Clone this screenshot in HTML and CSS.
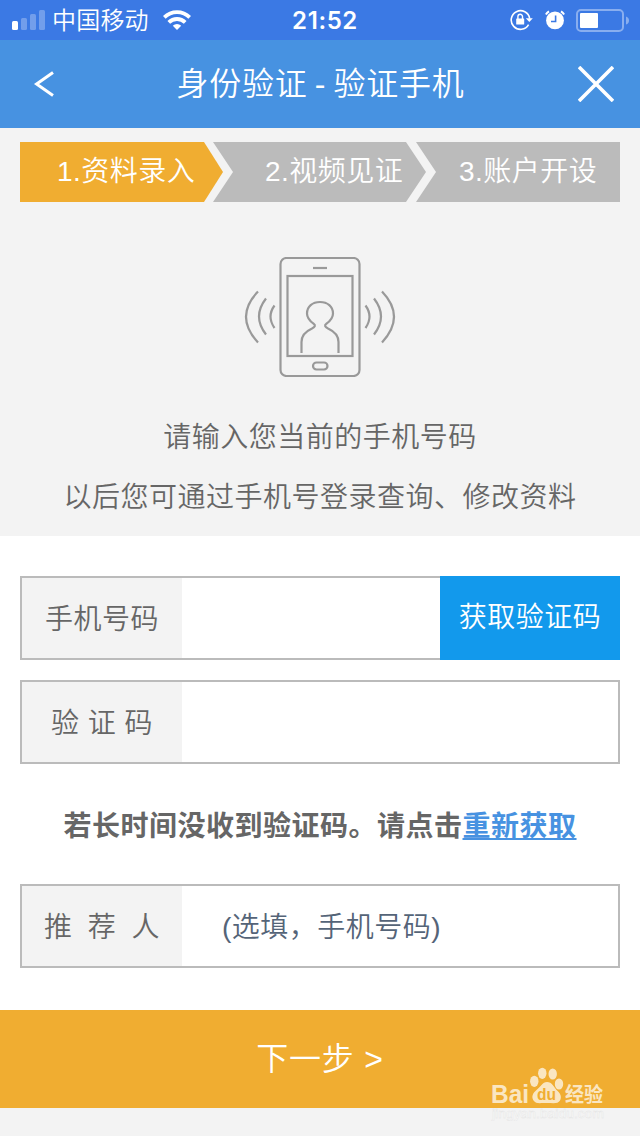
FILE: index.html
```html
<!DOCTYPE html>
<html lang="zh-CN">

<head>
    <meta charset="UTF-8">
    <meta name="viewport" content="width=device-width, initial-scale=1.0">
    <title>身份验证 - 验证手机</title>
    <link rel="stylesheet" href="styles.css">
</head>

<body>
<div class="status">
    <div class="status-left">
        <svg class="signal" width="34" height="20" viewBox="0 0 34 20" fill="#fff">
            <rect x="0" y="11" width="6" height="9" rx="1.5" />
            <g opacity=".28">
                <rect x="9" y="8" width="6" height="12" rx="1.5" />
                <rect x="18" y="4" width="6" height="16" rx="1.5" />
                <rect x="27" y="0" width="6" height="20" rx="1.5" />
            </g>
        </svg>
        <span class="carrier">中国移动</span>
        <svg class="wifi" width="28" height="20" viewBox="0 0 28 20" fill="none" stroke="#fff" stroke-width="3.8">
            <path d="M1.3 7.3a18 18 0 0 1 25.4 0" />
            <path d="M5.8 12.4a11.6 11.6 0 0 1 16.4 0" />
            <path d="M14 20l-4.2-4.3a6 6 0 0 1 8.4 0z" fill="#fff" stroke="none" />
        </svg>
    </div>
    <span class="time">21:52</span>
    <div class="status-right">
        <svg width="24" height="22" viewBox="0 0 24 22" fill="none" stroke="#fff" stroke-width="1.6">
            <path d="M18.6 15.6a9.3 9.3 0 1 1 1.1-6" />
            <path d="M15.8 9.2h7L19.3 13z" fill="#fff" stroke="none" />
            <rect x="6.2" y="9.4" width="8" height="6.2" rx=".6" fill="#fff" stroke="none" />
            <path d="M7.9 10V7.6a2.3 2.3 0 0 1 4.6 0V10" stroke-width="1.4" />
        </svg>
        <svg class="alarm" width="20" height="20" viewBox="0 0 20 20">
            <circle cx="10" cy="10.4" r="8.9" fill="#fff" />
            <path d="M.9 4.6A9 9 0 0 1 4 1.4M19.1 4.6A9 9 0 0 0 16 1.4" fill="none" stroke="#fff" stroke-width="2" />
            <path d="M10.6 5.5v6H6" fill="none" stroke="#3b79e4" stroke-width="1.6" />
        </svg>
        <svg class="battery" width="54" height="24" viewBox="0 0 54 24">
            <rect x="1" y="2" width="46" height="21" rx="4" fill="none" stroke="#fff" stroke-width="2" opacity=".4" />
            <path d="M50 8.5q3 1 3 4t-3 4z" fill="#fff" opacity=".4" />
            <rect x="4" y="5" width="18" height="15" rx="1" fill="#fff" />
        </svg>
    </div>
</div>

<div class="header">
    <svg class="back" width="22" height="28" viewBox="0 0 22 28" fill="none" stroke="#fff" stroke-width="3">
        <path d="M20 2.6L3.6 14 20 25.4" />
    </svg>
    <h1>身份验证 - 验证手机</h1>
    <svg class="close" width="36" height="36" viewBox="0 0 36 36" stroke="#fff" stroke-width="3.6">
        <path d="M1 1l34 34M35 1L1 35" />
    </svg>
</div>

<div class="intro">
    <div class="steps">
        <div class="step step1">1.资料录入</div>
        <div class="step step2">2.视频见证</div>
        <div class="step step3">3.账户开设</div>
    </div>
    <svg class="phone" width="152" height="120" viewBox="0 0 152 120" fill="none" stroke="#999" stroke-width="2.2">
        <rect x="36.5" y="1" width="79" height="118" rx="6" />
        <path d="M69 11h14" />
        <rect x="43.5" y="19" width="65" height="80" />
        <rect x="69" y="105.5" width="14.5" height="7" rx="3.5" />
        <path d="M57.5 96V85c0-7 5-11 10.5-13.5 3-1.500 4-3 1.500-4.800-4-3-6.500-6-6.500-10.200 0-7 5.500-11.500 13-11.500s13 4.500 13 11.500c0 4.200-2.500 7.200-6.500 10.200-2.500 1.800-1.500 3.300 1.500 4.800 5.500 2.500 10.500 6.500 10.500 13.500v11" />
        <path d="M30.5 48.5q-8 11 0 22.500M22 41.5q-14 18 0 36M14 34.5q-24 25 0 51" />
        <path d="M121.5 48.5q8 11 0 22.500M130 41.5q14 18 0 36M138 34.5q24 25 0 51" />
    </svg>
    <p>请输入您当前的手机号码</p>
    <p>以后您可通过手机号登录查询、修改资料</p>
</div>

<div class="form">
    <div class="row">
        <label>手机号码</label>
        <div class="field"></div>
        <div class="code">获取验证码</div>
    </div>
    <div class="row">
        <label>验 证 码</label>
        <div class="field"></div>
    </div>
    <p class="tip">若长时间没收到验证码。请点击<a>重新获取</a></p>
    <div class="row">
        <label class="wide">推 荐 人</label>
        <div class="field">(选填，手机号码)</div>
    </div>
</div>

<div class="next">下一步 &gt;</div>

<div class="mark">
    <svg width="120" height="56" viewBox="0 0 120 56">
        <g class="logo">
            <text x="2" y="36.5" font-size="26" textLength="38" lengthAdjust="spacingAndGlyphs">Bai</text>
            <ellipse cx="45.3" cy="15.3" rx="4.2" ry="5.6" />
            <ellipse cx="53.3" cy="7.3" rx="4.2" ry="5.6" />
            <ellipse cx="63.7" cy="8" rx="4.2" ry="5.6" />
            <ellipse cx="70" cy="18" rx="4.2" ry="5.6" />
            <path d="M58 16c5 0 7 5 9.500 8 4 3 5.500 7 3.500 10.500-2 3.500-6 2.500-13.500 2.500s-10.500 1-13-2.500c-2.500-4-.5-7.500 3-10.500 4-3 6-8 10.500-8z" />
            <text class="cn" x="76" y="36" font-size="20" textLength="38" lengthAdjust="spacingAndGlyphs">经验</text>
        </g>
        <text class="du" x="48" y="34" font-size="16" textLength="19" lengthAdjust="spacingAndGlyphs">du</text>
        <text class="site" x="3" y="51.5" font-size="13" textLength="112" lengthAdjust="spacingAndGlyphs">jingyan.baidu.com</text>
    </svg>
</div>
</body>

</html>
```
FILE: styles.css
```css
* {
    box-sizing: border-box;
}

body,
html {
    margin: 0;
    padding: 0;
}

body {
    position: relative;
    width: 640px;
    height: 1136px;
    overflow: hidden;
    background-color: #f3f3f3;
    color: #666;
    font-family: "Liberation Sans", "Noto Sans CJK SC", sans-serif;
    font-size: 28px;
    font-weight: 350;
    letter-spacing: .5px;
}

svg {
    display: block;
    flex: none;
}

p,
h1 {
    margin: 0;
}

.status {
    display: grid;
    grid-template-columns: 1fr auto 1fr;
    align-items: center;
    height: 40px;
    padding: 0 11px 0 12px;
    background-color: #3b79e4;
    color: #fff;
}

.status-left,
.status-right {
    display: flex;
    align-items: center;
}

.status-right {
    justify-content: flex-end;
}

.carrier {
    margin: 0 14px 0 6px;
    padding-top: 2px;
    font-size: 24px;
    line-height: 38px;
    letter-spacing: .2px;
}

.time {
    padding-left: 9px;
    font-family: Inter, sans-serif;
    font-size: 24px;
    font-weight: 600;
    letter-spacing: .6px;
}

.alarm {
    margin: 0 11px;
}

.battery {
    margin-right: -1px;
}

.header {
    display: flex;
    align-items: center;
    justify-content: space-between;
    height: 88px;
    padding: 0 26px 0 33px;
    background-color: #4792e1;
    color: #fff;
}

.header h1 {
    padding: 0 0 7px 8px;
    font-size: 32px;
    font-weight: 350;
    letter-spacing: .8px;
    word-spacing: -2.5px;
}

.intro {
    height: 408px;
    padding-top: 14px;
    text-align: center;
}

.steps {
    display: flex;
    height: 60px;
    margin: 0 20px;
    color: #fff;
    line-height: 59px;
    text-align: left;
}

.step {
    background-color: #bbb;
}

.step1 {
    width: 203px;
    padding-left: 37px;
    background-color: #f0ad31;
    clip-path: polygon(0 0, 184px 0, 100% 50%, 184px 100%, 0 100%);
}

.step2 {
    width: 213px;
    margin-left: -10px;
    padding-left: 52px;
    clip-path: polygon(0 0, 193px 0, 100% 50%, 193px 100%, 0 100%, 20px 50%);
}

.step3 {
    width: 204px;
    margin-left: -10px;
    padding-left: 43px;
    clip-path: polygon(0 0, 100% 0, 100% 100%, 0 100%, 20px 50%);
}

.phone {
    margin: 55px auto 31px;
}

.intro p {
    line-height: 60px;
}

.form {
    height: 474px;
    padding: 40px 20px 0;
    background-color: #fff;
}

.row {
    display: flex;
    height: 84px;
    margin-bottom: 20px;
    border: 2px solid #bbb;
    line-height: 83px;
}

.row label {
    width: 160px;
    background-color: #f3f3f3;
    text-align: center;
}

.row .wide {
    word-spacing: 7px;
}

.field {
    flex: 1;
    padding-left: 40px;
    color: #556478;
}

.code {
    width: 180px;
    margin: -2px -2px -2px 0;
    background-color: #1299ec;
    color: #fff;
    text-align: center;
}

.tip {
    height: 100px;
    line-height: 85px;
    font-weight: bold;
    text-align: center;
}

.tip a {
    color: #4792e1;
    text-decoration: underline;
}

.next {
    height: 98px;
    background-color: #f0ad31;
    color: #fff;
    font-size: 32px;
    line-height: 98px;
    letter-spacing: .8px;
    text-align: center;
}

/* logo lies over the bottom bar */
.mark {
    position: absolute;
    left: 489px;
    top: 1066px;
    letter-spacing: 0;
}

.logo {
    fill: #fff;
    font-weight: bold;
    opacity: .7;
}

.cn {
    font-family: "Noto Sans CJK SC", sans-serif;
}

.du {
    fill: #f0ad31;
    font-weight: bold;
}

.site {
    fill: #fff;
    stroke: #ddd;
    stroke-width: .4px;
    opacity: .7;
}
```
